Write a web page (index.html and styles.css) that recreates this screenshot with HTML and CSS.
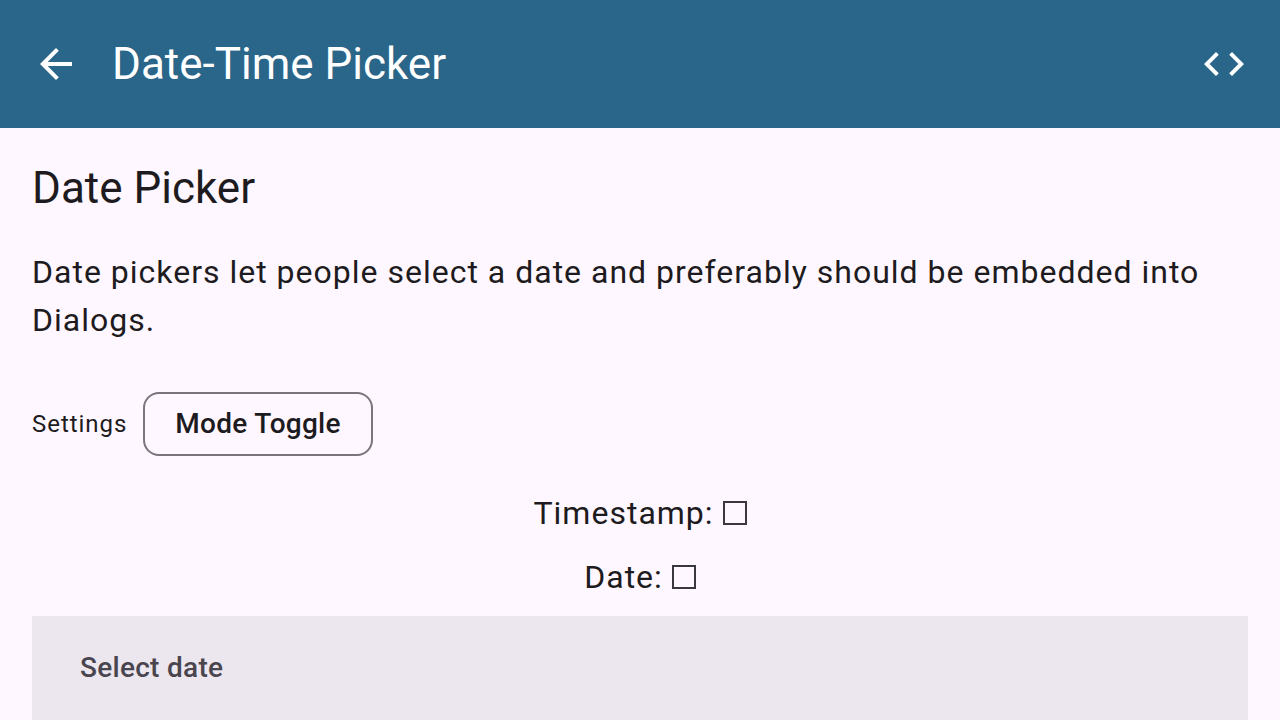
FILE: index.html
```html
<!DOCTYPE html>
<html lang="en">
<head>
<meta charset="utf-8">
<meta name="viewport" content="width=device-width, initial-scale=1">
<title>Date-Time Picker</title>
<link rel="stylesheet" href="styles.css">
</head>
<body>
<header class="app-bar">
  <button class="icon-button" type="button" aria-label="Back">
    <svg class="icon" viewBox="0 0 24 24" aria-hidden="true"><path d="M20 11H7.83l5.59-5.59L12 4l-8 8 8 8 1.41-1.41L7.83 13H20v-2z"/></svg>
  </button>
  <h1 class="app-title">Date-Time Picker</h1>
  <button class="icon-button" type="button" aria-label="View source">
    <svg class="icon" viewBox="0 0 24 24" aria-hidden="true"><path d="M9.4 16.6L4.8 12l4.6-4.6L8 6l-6 6 6 6 1.4-1.4zm5.2 0l4.6-4.6-4.6-4.6L16 6l6 6-6 6-1.4-1.4z"/></svg>
  </button>
</header>
<main class="content">
  <h2 class="section-title">Date Picker</h2>
  <p class="description">Date pickers let people select a date and preferably should be embedded into Dialogs.</p>
  <div class="settings">
    <span class="settings-label">Settings</span>
    <button class="chip" type="button">Mode Toggle</button>
  </div>
  <div class="values">
    <p class="value">Timestamp: <span class="empty-mark" role="img" aria-label="empty"></span></p>
    <p class="value">Date: <span class="empty-mark" role="img" aria-label="empty"></span></p>
  </div>
  <section class="picker">
    <h3 class="picker-title">Select date</h3>
  </section>
</main>
</body>
</html>
```

FILE: styles.css
```css
* {
  box-sizing: border-box;
}

body {
  margin: 0;
  background: #fef7ff;
  color: #1d1b20;
  font-family: Roboto, sans-serif;
}

h1, h2, h3, p {
  margin: 0;
  font-weight: 400;
}

.app-bar {
  display: flex;
  align-items: center;
  padding: 16px 8px;
  background: #2a6689;
  color: #fff;
}

.icon-button {
  display: flex;
  align-items: center;
  justify-content: center;
  width: 96px;
  height: 96px;
  padding: 0;
  border: 0;
  border-radius: 50%;
  background: none;
  color: inherit;
}

.icon {
  width: 48px;
  height: 48px;
  fill: currentColor;
}

.app-title {
  flex: 1;
  padding-left: 8px;
  font-size: 44px;
  line-height: 56px;
}

.content {
  padding: 32px 32px 0;
}

.section-title {
  font-size: 44px;
  line-height: 56px;
}

.description {
  margin-top: 32px;
  font-size: 32px;
  line-height: 48px;
  letter-spacing: 1px;
}

.settings {
  display: flex;
  align-items: center;
  gap: 16px;
  margin-top: 48px;
}

.settings-label {
  font-size: 24px;
  line-height: 32px;
  letter-spacing: 0.04em;
}

.chip {
  padding: 10px 30px;
  border: 2px solid #79747e;
  border-radius: 16px;
  background: none;
  color: inherit;
  font: 500 28px/40px Roboto, sans-serif;
  letter-spacing: 0.01em;
}

.values {
  display: grid;
  gap: 16px;
  margin-top: 33px;
  text-align: center;
}

.value {
  font-size: 32px;
  line-height: 48px;
  letter-spacing: 1px;
}

.empty-mark {
  display: inline-block;
  width: 24px;
  height: 24px;
  border: 2px solid #3a383d;
  vertical-align: -1px;
}

.picker {
  margin-top: 15px;
  padding: 32px 48px;
  background: #ece6ee;
}

.picker-title {
  color: #49454f;
  font-size: 28px;
  font-weight: 500;
  line-height: 40px;
  letter-spacing: 0.01em;
}
```
